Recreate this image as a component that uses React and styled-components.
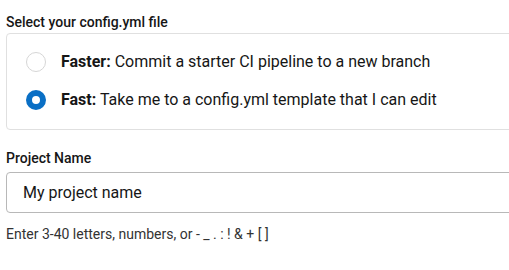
import React, { useState } from "react";
import styled, { createGlobalStyle } from "styled-components";

const GlobalStyle = createGlobalStyle`
  html, body {
    margin: 0;
    padding: 0;
    background: #fff;
    overflow: hidden;
  }
  body {
    font-family: Roboto, "Liberation Sans", Arial, sans-serif;
    color: #161616;
  }
`;

const Page = styled.div`
  width: 540px;
  padding: 14px 6px 0 6px;
  display: flex;
  flex-direction: column;
`;

const FieldLabel = styled.div`
  font-size: 14px;
  font-weight: 500;
  line-height: 16px;
  color: #161616;
  margin-bottom: ${(p) => p.gap || 3}px;
`;

const Card = styled.div`
  border: 1px solid #e0e0e0;
  border-radius: 4px;
  padding: 18px 19px 19px 19px;
  display: flex;
  flex-direction: column;
  gap: 18px;
`;

const Option = styled.label`
  display: flex;
  align-items: center;
  gap: 15px;
  cursor: pointer;
  font-size: 16px;
  line-height: 20px;
  color: #161616;
`;

const Radio = styled.span`
  width: 20px;
  height: 20px;
  box-sizing: border-box;
  border-radius: 50%;
  flex-shrink: 0;
  background: #fff;
  border: ${(p) => (p.checked ? "6px solid #0a6fc5" : "1px solid #d6d6d6")};
`;

const Strong = styled.b`
  font-weight: 700;
`;

const Section = styled.div`
  margin-top: 20px;
  display: flex;
  flex-direction: column;
`;

const Input = styled.input`
  box-sizing: border-box;
  height: 41px;
  width: 100%;
  border: 1px solid #b8b8b8;
  border-radius: 4px;
  padding: 0 16px;
  font-family: inherit;
  font-size: 16px;
  color: #161616;
  outline: none;
`;

const Help = styled.div`
  margin-top: 13px;
  font-size: 14px;
  line-height: 16px;
  color: #333;
`;

const options = [
  { id: "faster", title: "Faster:", text: "Commit a starter CI pipeline to a new branch" },
  { id: "fast", title: "Fast:", text: "Take me to a config.yml template that I can edit" },
];

export default function App() {
  const [choice, setChoice] = useState("fast");
  const [name, setName] = useState("My project name");

  return (
    <Page>
      <GlobalStyle />
      <FieldLabel gap={3}>Select your config.yml file</FieldLabel>
      <Card>
        {options.map((o) => (
          <Option key={o.id} onClick={() => setChoice(o.id)}>
            <Radio checked={choice === o.id} />
            <span>
              <Strong>{o.title}</Strong> {o.text}
            </span>
          </Option>
        ))}
      </Card>
      <Section>
        <FieldLabel gap={6}>Project Name</FieldLabel>
        <Input value={name} onChange={(e) => setName(e.target.value)} />
        <Help>Enter 3-40 letters, numbers, or - _ . : ! &amp; + [ ]</Help>
      </Section>
    </Page>
  );
}
